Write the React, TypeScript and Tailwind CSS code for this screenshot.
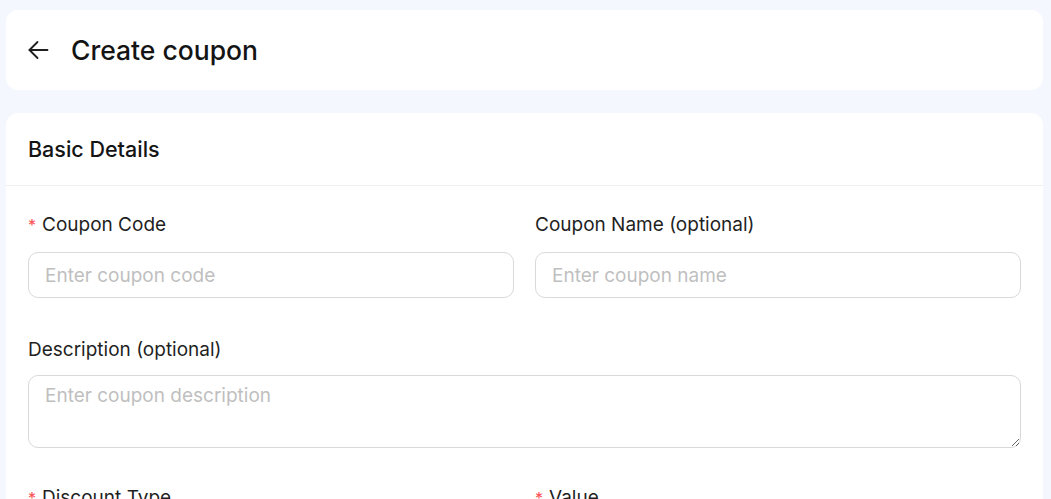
import React from 'react';

const font = { fontFamily: 'Inter, "Noto Sans", sans-serif' };

function BackArrow() {
  return (
    <svg width="21" height="20" viewBox="0 0 21 20" fill="none" stroke="#1f1f1f" strokeWidth="1.8" strokeLinecap="round" strokeLinejoin="round">
      <path d="M19.5 10H1.5" />
      <path d="M9.5 2L1.5 10l8 8" />
    </svg>
  );
}

function Label({ children, required }: { children: React.ReactNode; required?: boolean }) {
  return (
    <label className="flex items-center h-6 text-[19px] text-[#1f1f1f] leading-6">
      {required && <span className="text-[#ff4d4f] mr-[6px] text-[16px]">*</span>}
      {children}
    </label>
  );
}

const inputCls =
  'mt-[15px] w-full h-[46px] rounded-[10px] border border-[#d9d9d9] px-4 text-[19px] placeholder:text-[#bfbfbf] outline-none';

export default function App() {
  return (
    <div className="min-h-screen bg-[#f4f7fd] pt-[10px] pl-[6px] pr-[8px]" style={font}>
      {/* Page header */}
      <div className="h-20 bg-white rounded-[12px] flex items-center pl-[22px] gap-[22px]">
        <BackArrow />
        <h1 className="text-[26.5px] font-medium text-[#141414] leading-none">Create coupon</h1>
      </div>

      {/* Form card */}
      <div className="mt-[23px] bg-white rounded-t-[12px]">
        <div className="h-[73px] flex items-center px-[22px] border-b border-[#eeeeee]">
          <h2 className="text-[21.5px] font-medium text-[#141414]">Basic Details</h2>
        </div>

        <div className="px-[22px] pt-[27px]">
          <div className="grid grid-cols-2 gap-x-[21px]">
            <div>
              <Label required>Coupon Code</Label>
              <input className={inputCls} placeholder="Enter coupon code" />
            </div>
            <div>
              <Label>Coupon Name (optional)</Label>
              <input className={inputCls} placeholder="Enter coupon name" />
            </div>
          </div>

          <div className="mt-[40px]">
            <Label>Description (optional)</Label>
            <textarea
              className="block mt-[13px] w-full h-[73px] rounded-[10px] border border-[#d9d9d9] px-4 py-[8px] text-[19px] leading-6 placeholder:text-[#bfbfbf] outline-none"
              placeholder="Enter coupon description"
            />
          </div>

          <div className="grid grid-cols-2 gap-x-[21px] mt-[38px]">
            <Label required>Discount Type</Label>
            <Label required>Value</Label>
          </div>
        </div>
      </div>
    </div>
  );
}
